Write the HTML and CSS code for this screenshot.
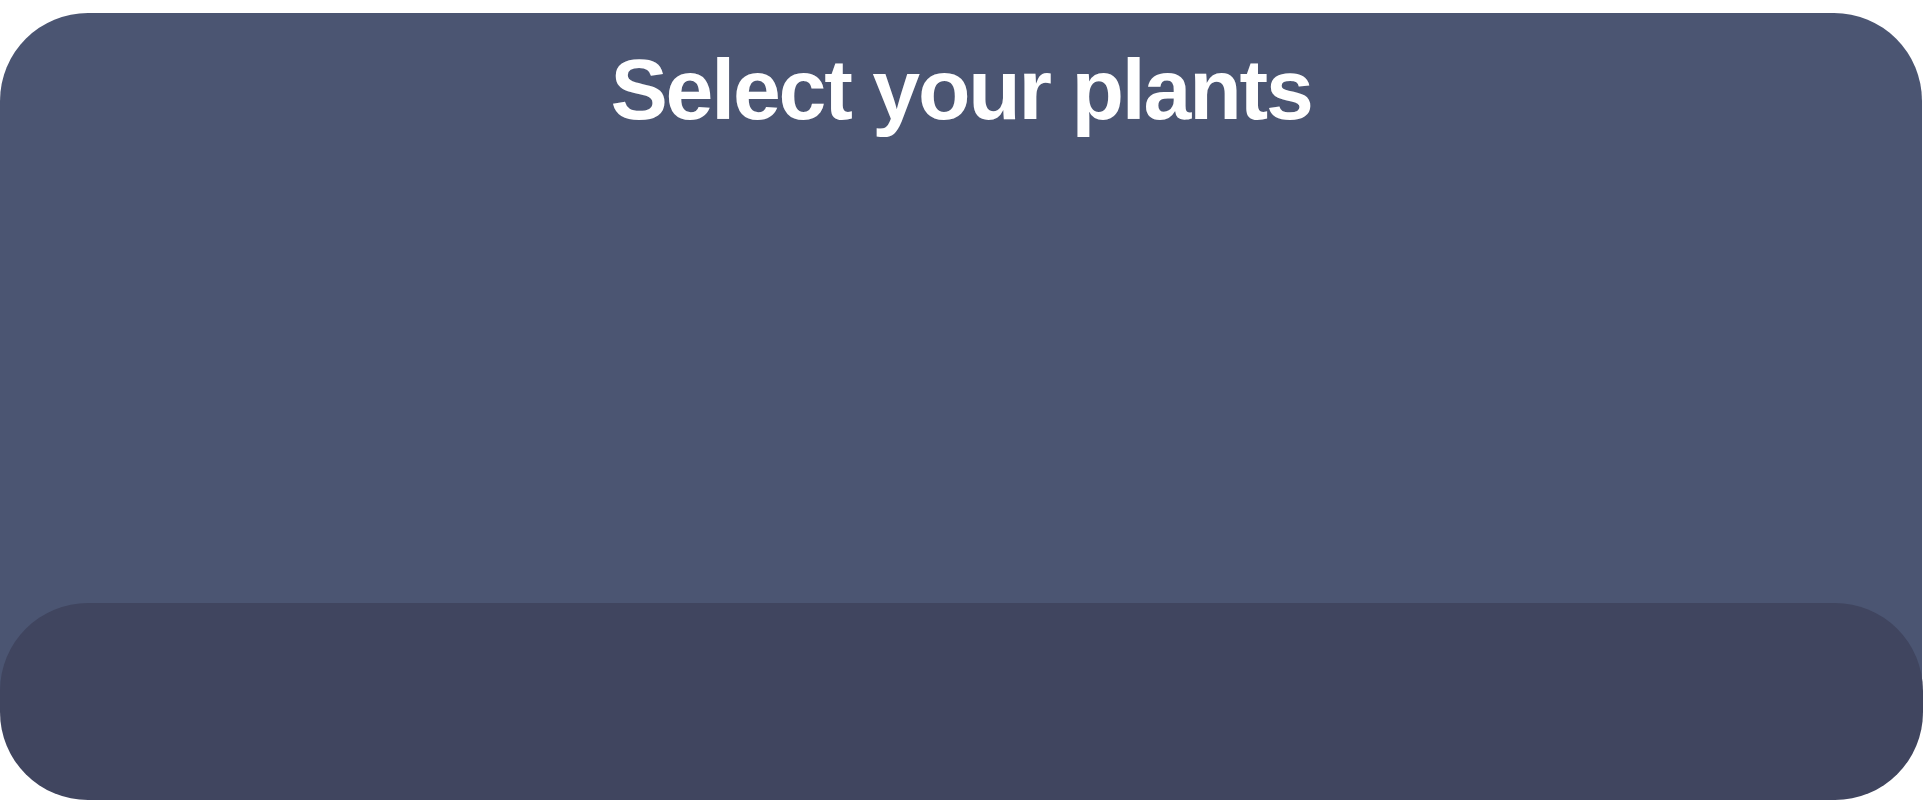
FILE: index.html
```html
<!DOCTYPE html>
<html lang="en">
<head>
<meta charset="utf-8">
<title>Select your plants</title>
<link rel="stylesheet" href="styles.css">
</head>
<body>
  <main class="page">
    <section class="card">
      <h1 class="title">Select your plants</h1>
    </section>
    <div class="tray"></div>
  </main>
</body>
</html>
```
FILE: styles.css
```css
html, body {
  margin: 0;
  padding: 0;
  background: #ffffff;
}
body {
  font-family: "Liberation Sans", Arial, Helvetica, sans-serif;
  overflow: hidden;
}
.page {
  display: flex;
  flex-direction: column;
  padding-top: 13px;
}
.card {
  margin-right: 2px;
  height: 687px;
  box-sizing: border-box;
  padding-top: 33px;
  background: #4b5572;
  border-radius: 88px 88px 0 0;
}
.title {
  margin: 0;
  text-align: center;
  color: #ffffff;
  font-size: 86px;
  font-weight: 700;
  line-height: 1;
  letter-spacing: -2.2px;
}
.tray {
  position: relative;
  margin-top: -97px;
  margin-right: 1px;
  height: 197px;
  background: #40455f;
  border-radius: 88px;
}
```
